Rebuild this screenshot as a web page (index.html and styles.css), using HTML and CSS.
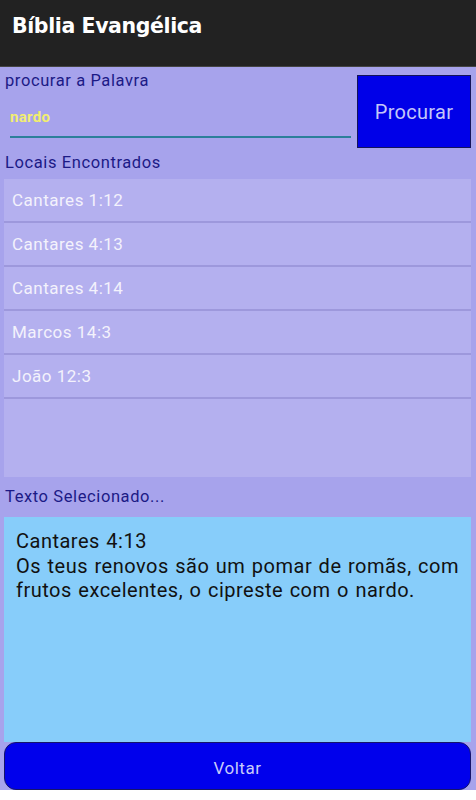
FILE: index.html
```html
<!DOCTYPE html>
<html lang="pt">
  <head>
    <meta charset="UTF-8" />
    <meta name="viewport" content="width=device-width, initial-scale=1.0" />
    <title>Bíblia Evangélica</title>
    <link rel="stylesheet" href="styles.css">
  </head>
  <body>
    <div class="app">
      <div class="toolbar">
        <h1>Bíblia Evangélica</h1>
      </div>

      <div class="content">
        <div class="search">
          <div class="search_field">
            <label for="word">procurar a Palavra</label>
            <input id="word" type="text" value="nardo" />
          </div>
          <button id="searchBtn">Procurar</button>
        </div>

        <p class="caption">Locais Encontrados</p>
        <ul class="places">
          <li>Cantares 1:12</li>
          <li>Cantares 4:13</li>
          <li>Cantares 4:14</li>
          <li>Marcos 14:3</li>
          <li>João 12:3</li>
        </ul>

        <p class="caption selected">Texto Selecionado...</p>
        <div class="verse">
          Cantares 4:13<br />
          Os teus renovos são um pomar de romãs, com frutos excelentes, o cipreste com o nardo.
        </div>

        <button class="back">Voltar</button>
      </div>
    </div>
  </body>
</html>
```

FILE: styles.css
```css
* {
  margin: 0;
  padding: 0;
  box-sizing: border-box;
}

body {
  background: white;
  font-family: Roboto, "Liberation Sans", sans-serif;
}

.app {
  width: 476px;

  .toolbar {
    height: 67px;
    background: #222222;
    padding: 14px 12px 0;
    border-bottom: 1px solid #444;

    > h1 {
      font-family: "DejaVu Sans", sans-serif;
      font-weight: bold;
      font-size: 20.5px;
      letter-spacing: -0.4px;
      color: white;
    }
  }

  .content {
    background: #a7a3ec;
    padding: 0 5px 0 4px;
    height: 723px;
    display: flex;
    flex-direction: column;

    .search {
      display: flex;
      gap: 6px;
      padding-top: 3px;
      height: 82px;

      .search_field {
        flex: 1;
        display: flex;
        flex-direction: column;

        > label {
          font-size: 16.5px;
          letter-spacing: 0.6px;
          color: #1c1a86;
          padding-left: 1px;
          line-height: 22px;
        }

        > input {
          margin: 13px 0 0 6px;
          height: 33px;
          background: transparent;
          border: none;
          border-bottom: 2px solid #2c7f9a;
          color: #f2ee70;
          font-family: Roboto, sans-serif;
          font-weight: bold;
          font-size: 15px;
          letter-spacing: 0.3px;
          padding: 0 0 8px;
          outline: none;
        }
      }

      > button {
        width: 114px;
        height: 73px;
        margin-top: 5px;
        background: #0000e8;
        border: 1px solid #14145a;
        color: #c4c6f8;
        font-family: Roboto, sans-serif;
        font-size: 20px;
        letter-spacing: 0.3px;
      }
    }

    .caption {
      font-size: 16.5px;
      letter-spacing: 0.6px;
      color: #1c1a86;
      padding-left: 1px;
      height: 30px;
      line-height: 28px;
    }

    .selected {
      height: 40px;
      line-height: 40px;
    }

    .places {
      list-style: none;
      background: #b4b0ef;
      height: 298px;

      > li {
        height: 44px;
        line-height: 43px;
        padding-left: 8px;
        font-size: 17px;
        letter-spacing: 0.5px;
        color: #f3f2fc;
        border-bottom: 2px solid #9d98dc;
      }
    }

    .verse {
      background: #87cdfa;
      height: 225px;
      padding: 12px 4px 12px 12px;
      font-size: 20px;
      letter-spacing: 0.5px;
      word-spacing: 1px;
      line-height: 24.5px;
      color: #111;
    }

    .back {
      height: 48px;
      padding-top: 4px;
      background: #0000ec;
      border: 1px solid #15156a;
      border-radius: 12px;
      color: #c8cbfa;
      font-family: Roboto, sans-serif;
      font-size: 17px;
      letter-spacing: 0.5px;
    }
  }
}
```
